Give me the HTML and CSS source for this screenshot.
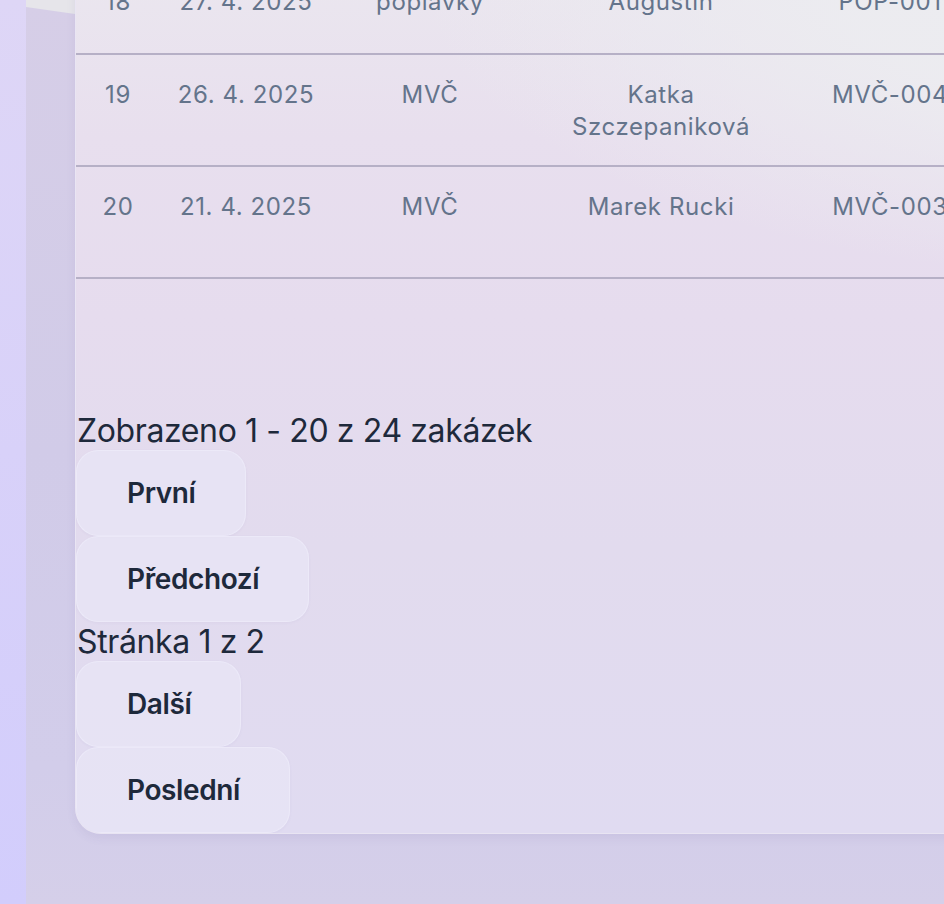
FILE: index.html
```html
<!DOCTYPE html>
<html lang="cs">
<head>
<meta charset="utf-8">
<title>Zakázky</title>
<link rel="stylesheet" href="styles.css">
</head>
<body>
  <div class="edge"></div>
  <main class="main">
    <div class="topband"></div>
    <section class="card">
      <table class="orders">
        <colgroup>
          <col class="c-num"><col class="c-date"><col class="c-type"><col class="c-name"><col class="c-code"><col class="c-rest">
        </colgroup>
        <tbody>
          <tr class="row-first">
            <td>18</td><td>27. 4. 2025</td><td>poplavky</td><td>Augustin</td><td>POP-001</td><td></td>
          </tr>
          <tr>
            <td>19</td><td>26. 4. 2025</td><td>MVČ</td><td>Katka Szczepaniková</td><td>MVČ-004</td><td></td>
          </tr>
          <tr>
            <td>20</td><td>21. 4. 2025</td><td>MVČ</td><td>Marek Rucki</td><td>MVČ-003</td><td></td>
          </tr>
        </tbody>
      </table>
      <div class="pager">
        <div class="pager-info">Zobrazeno 1 - 20 z 24 zakázek</div>
        <button class="pager-btn">První</button>
        <button class="pager-btn">Předchozí</button>
        <div class="pager-info">Stránka 1 z 2</div>
        <button class="pager-btn">Další</button>
        <button class="pager-btn">Poslední</button>
      </div>
    </section>
  </main>
</body>
</html>
```
FILE: styles.css
```css
html, body {
  margin: 0;
  padding: 0;
  height: 904px;
  overflow: hidden;
}
body {
  display: flex;
  font-family: Inter, "Noto Sans", sans-serif;
  background: linear-gradient(180deg, #ded6f6 0%, #d8d1f9 50%, #d2cdfc 100%);
}
.edge {
  width: 26px;
  flex: none;
}
.main {
  position: relative;
  flex: 1;
  padding-left: 49px;
  background: linear-gradient(180deg, #d6cee7 0%, #d1cbe8 50%, #d2cdea 85%, #d5cfe9 100%);
  overflow: hidden;
}
.topband {
  position: absolute;
  left: 0;
  top: 0;
  width: 100%;
  height: 40px;
  background: #e6e5ea;
  clip-path: polygon(0 0, 100% 0, 100% 100%, 49px 14px, 0 7px);
}
.card {
  position: relative;
  width: 1300px;
  margin-top: -58px;
  border-left: 1px solid #e9e5f3;
  border-bottom: 1px solid #e8e4f2;
  border-bottom-left-radius: 26px;
  overflow: hidden;
  background:
    radial-gradient(ellipse 760px 300px at 85% 40px, rgba(236, 237, 240, 1) 0%, rgba(236, 236, 240, 0.92) 45%, rgba(236, 236, 240, 0) 100%),
    linear-gradient(180deg, #ebe8ef 0%, #e8dfee 22%, #e6dcee 42%, #e2dbee 68%, #e0dbf1 100%);
  box-shadow: 0 4px 10px rgba(90, 80, 140, 0.08);
}
.orders {
  border-collapse: collapse;
  table-layout: fixed;
  width: 1300px;
  color: #64748b;
  font-size: 24px;
  line-height: 32px;
  letter-spacing: 0.6px;
}
.c-num { width: 84px; }
.c-date { width: 172px; }
.c-type { width: 196px; }
.c-name { width: 266px; }
.c-code { width: 192px; }
.orders tr {
  height: 112px;
  border-bottom: 2px solid #b6b0c6;
}
.orders td {
  text-align: center;
  vertical-align: top;
  padding: 24px 8px 0;
  box-sizing: border-box;
}
.orders td:nth-child(4) {
  padding-left: 18px;
  padding-right: 18px;
}
.orders .row-first td {
  padding-top: 44px;
}
.pager {
  margin-top: 132px;
  display: flex;
  flex-direction: column;
  align-items: flex-start;
}
.pager-info {
  font-size: 32px;
  line-height: 40px;
  letter-spacing: -0.38px;
  color: #1e293b;
  height: 39px;
  padding-left: 1px;
}
.pager-btn {
  font-family: Inter, "Noto Sans", sans-serif;
  font-size: 28px;
  font-weight: 600;
  line-height: 36px;
  letter-spacing: -0.4px;
  color: #1e293b;
  padding: 24px 49px 24px 50px;
  margin: 0;
  background: rgba(232, 230, 246, 0.75);
  border: 1px solid rgba(236, 234, 248, 0.9);
  border-radius: 22px;
  box-shadow: 0 1px 3px rgba(120, 110, 170, 0.06);
  cursor: pointer;
}
```
